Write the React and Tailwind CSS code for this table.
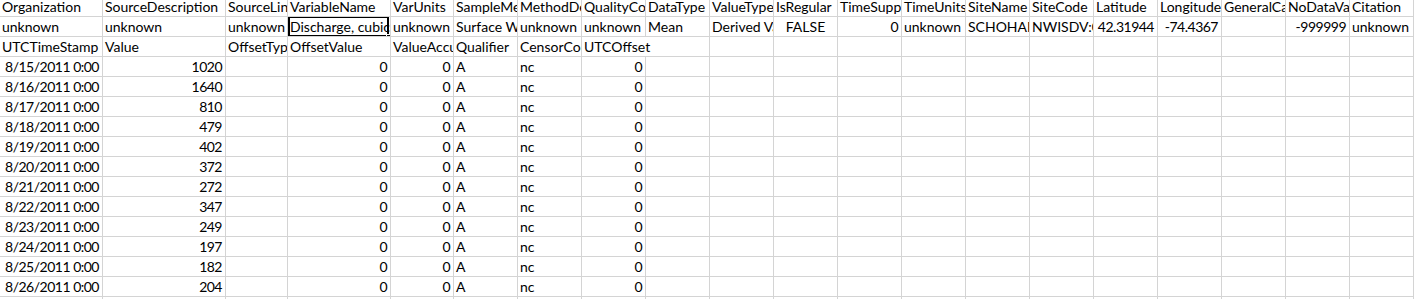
import React from "react";

const WIDTHS = [
  "w-[103px]", "w-[123px]", "w-[62px]", "w-[103px]", "w-[63px]",
  "w-[64px]", "w-[64px]", "w-[64px]", "w-[64px]", "w-[64px]",
  "w-[64px]", "w-[64px]", "w-[64px]", "w-[64px]", "w-[64px]",
  "w-[64px]", "w-[64px]", "w-[64px]", "w-[64px]", "w-[64px]",
];

const L = (t) => ({ t, a: "l" });
const R = (t) => ({ t, a: "r" });
const C = (t) => ({ t, a: "c" });
const E = { t: "", a: "l" };

const header1 = [
  "Organization", "SourceDescription", "SourceLink", "VariableName", "VarUnits",
  "SampleMedium", "MethodDescription", "QualityControlLevel", "DataType", "ValueType",
  "IsRegular", "TimeSupport", "TimeUnits", "SiteName", "SiteCode",
  "Latitude", "Longitude", "GeneralCategory", "NoDataValue", "Citation",
].map(L);

const row1 = [
  L("unknown"), L("unknown"), L("unknown"), { t: "Discharge, cubic feet per second", a: "l", sel: true }, L("unknown"),
  L("Surface Water"), L("unknown"), L("unknown"), L("Mean"), L("Derived Value"),
  C("FALSE"), R("0"), L("unknown"), L("SCHOHARIE CREEK AT PRATTSVILLE NY"), L("NWISDV:01350000"),
  R("42.31944"), R("-74.4367"), E, R("-999999"), L("unknown"),
];

const header2 = [
  L("UTCTimeStamp"), L("Value"), L("OffsetType"), L("OffsetValue"), L("ValueAccuracy"),
  L("Qualifier"), L("CensorCode"), { t: "UTCOffset", a: "l", over: true },
  ...Array(12).fill(E),
];

const values = [1020, 1640, 810, 479, 402, 372, 272, 347, 249, 197, 182, 204];

const dataRows = values.map((v, i) => [
  R(`8/${15 + i}/2011 0:00`), R(String(v)), E, R("0"), R("0"),
  L("A"), L("nc"), R("0"),
  ...Array(12).fill(E),
]);

const rows = [header1, row1, header2, ...dataRows, Array(20).fill(E)];

function Cell({ cell, w }) {
  const align =
    cell.a === "r"
      ? "justify-end pr-[3px] pl-[2px]"
      : cell.a === "c"
      ? "justify-center px-[2px]"
      : "justify-start pl-[2px] pr-[1px]";
  return (
    <div
      className={`relative flex shrink-0 items-end ${w} h-[20px] border-b border-[#d4d4d4] ${
        cell.over ? "overflow-visible z-10" : "border-r overflow-hidden"
      } ${align}`}
    >
      <span
        className={`whitespace-nowrap text-[14px] leading-[18px] text-black ${
          cell.a === "r" ? "tracking-[-0.5px]" : ""
        }`}
      >
        {cell.t}
      </span>
      {cell.sel && (
        <>
          <div className="absolute left-0 top-[-1px] w-[101px] h-[21px] border-2 border-black pointer-events-none" />
          <div className="absolute left-[98px] top-[17px] w-[6px] h-[6px] bg-black border border-white pointer-events-none" />
        </>
      )}
    </div>
  );
}

export default function App() {
  return (
    <div
      className="w-[1414px] h-[299px] overflow-hidden bg-white"
      style={{ fontFamily: "Lato, 'Open Sans', sans-serif" }}
    >
      <div className="-mt-[3px] flex flex-col">
        {rows.map((r, ri) => (
          <div key={ri} className="flex">
            {r.map((c, ci) => (
              <Cell key={ci} cell={c} w={WIDTHS[ci]} />
            ))}
          </div>
        ))}
      </div>
    </div>
  );
}
